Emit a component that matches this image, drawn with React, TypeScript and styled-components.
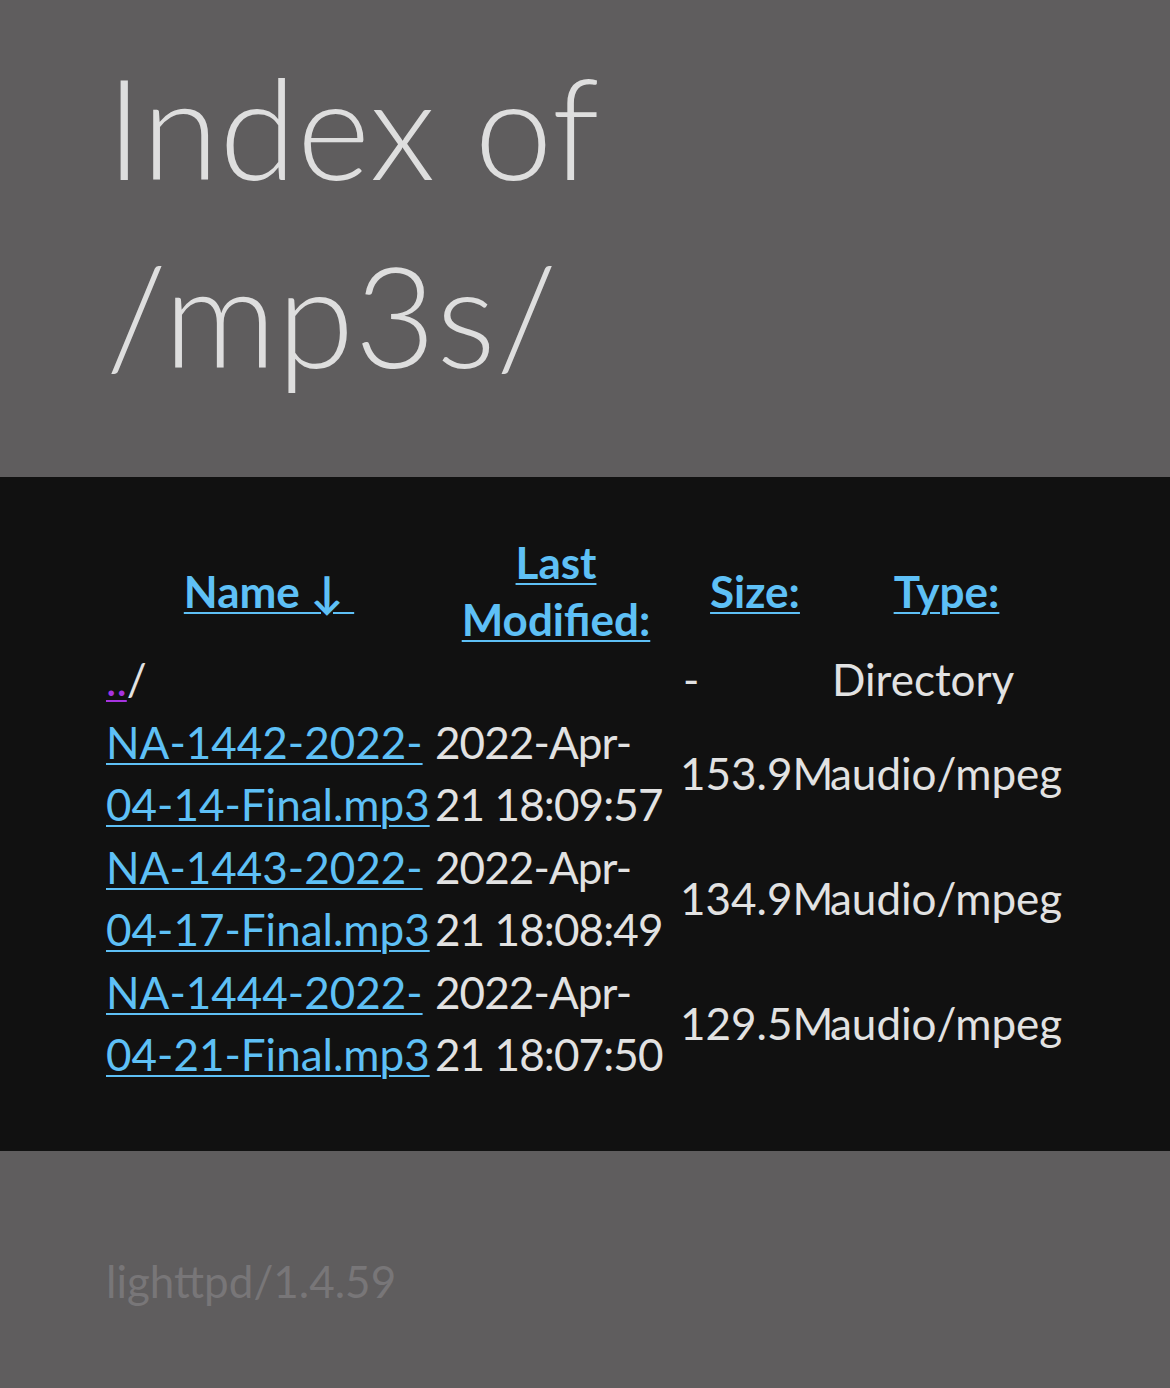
import React from "react";
import styled, { createGlobalStyle } from "styled-components";

const GlobalStyle = createGlobalStyle`
  html, body {
    margin: 0;
    padding: 0;
    background: #5f5d5e;
  }
  body {
    font-family: Lato, "Open Sans", "Liberation Sans", sans-serif;
  }
`;

const Page = styled.div`
  min-height: 1388px;
  background: #5f5d5e;
`;

const Header = styled.header`
  padding: 32px 106px 69px;
`;

const Title = styled.h1`
  margin: 0;
  font-size: 140px;
  font-weight: 300;
  line-height: 188px;
  color: #dedede;
  letter-spacing: 0.5px;
`;

const Listing = styled.main`
  background: #111111;
  padding: 57px 106px 65px;
`;

const Table = styled.table`
  width: 957px;
  border-collapse: collapse;
  border-spacing: 0;
  table-layout: fixed;
  font-size: 44px;
  color: #e2e2e2;
`;

const Th = styled.th`
  padding: 0;
  font-weight: 700;
  line-height: 57px;
  text-align: center;
  vertical-align: middle;
`;

const Td = styled.td<{ $indent?: number }>`
  padding: 0 0 0 ${(p) => p.$indent ?? 0}px;
  line-height: 62.5px;
  vertical-align: middle;
  white-space: nowrap;
`;

const DateCell = styled(Td)`
  letter-spacing: -0.9px;
`;

const Link = styled.a<{ $visited?: boolean }>`
  color: ${(p) => (p.$visited ? "#a633e0" : "#5ec0f6")};
  text-decoration: underline;
  text-decoration-thickness: 2px;
  text-underline-offset: 4px;
`;

const Footer = styled.footer`
  padding: 99px 106px 0;
  font-size: 44px;
  line-height: 62.5px;
  color: #787678;
`;

const files = [
  { a: "NA-1442-2022-", b: "04-14-Final.mp3", d1: "2022-Apr-", d2: "21 18:09:57", size: "153.9M" },
  { a: "NA-1443-2022-", b: "04-17-Final.mp3", d1: "2022-Apr-", d2: "21 18:08:49", size: "134.9M" },
  { a: "NA-1444-2022-", b: "04-21-Final.mp3", d1: "2022-Apr-", d2: "21 18:07:50", size: "129.5M" },
];

export default function App() {
  return (
    <Page>
      <GlobalStyle />
      <Header>
        <Title>
          Index of
          <br />
          /mp3s/
        </Title>
      </Header>
      <Listing>
        <Table>
          <colgroup>
            <col style={{ width: 326 }} />
            <col style={{ width: 248 }} />
            <col style={{ width: 150 }} />
            <col style={{ width: 233 }} />
          </colgroup>
          <thead>
            <tr>
              <Th>
                <Link href="#">Name ↓&nbsp;</Link>
              </Th>
              <Th>
                <Link href="#">
                  Last
                  <br />
                  Modified:
                </Link>
              </Th>
              <Th>
                <Link href="#">Size:</Link>
              </Th>
              <Th>
                <Link href="#">Type:</Link>
              </Th>
            </tr>
          </thead>
          <tbody>
            <tr>
              <Td>
                <Link href="#" $visited>
                  ..
                </Link>
                /
              </Td>
              <Td />
              <Td $indent={3}>-</Td>
              <Td $indent={2}>Directory</Td>
            </tr>
            {files.map((f) => (
              <tr key={f.a + f.b}>
                <Td>
                  <Link href="#">
                    {f.a}
                    <br />
                    {f.b}
                  </Link>
                </Td>
                <DateCell $indent={3}>
                  {f.d1}
                  <br />
                  {f.d2}
                </DateCell>
                <Td>{f.size}</Td>
                <Td>audio/mpeg</Td>
              </tr>
            ))}
          </tbody>
        </Table>
      </Listing>
      <Footer>lighttpd/1.4.59</Footer>
    </Page>
  );
}
